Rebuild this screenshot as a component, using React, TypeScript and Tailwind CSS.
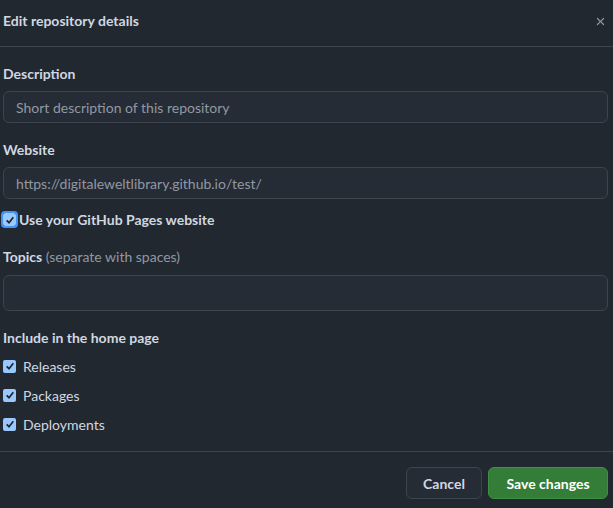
const Check = ({ focused = false }: { focused?: boolean }) => (
  <span
    className={`flex h-[13px] w-[13px] shrink-0 items-center justify-center rounded-[2px] bg-[#99c8ff] ${
      focused ? "outline outline-2 outline-[#4493f8]" : ""
    }`}
  >
    <svg viewBox="0 0 12 12" className="h-[10px] w-[10px]">
      <path d="M2 6.5 L4.8 9.2 L10 2.8" fill="none" stroke="#1f2328" strokeWidth="2" />
    </svg>
  </span>
);

const Field = ({ value, placeholder, tall = false }: { value?: string; placeholder?: string; tall?: boolean }) => (
  <div
    className={`mr-[5px] ml-[3px] flex items-center rounded-md border border-[#3d444d] bg-[#262c36] px-3 text-[14px] ${
      tall ? "h-[36px]" : "h-[32px]"
    }`}
  >
    {value ? <span className="text-[#9198a1]">{value}</span> : <span className="text-[#9198a1]">{placeholder}</span>}
  </div>
);

export default function App() {
  return (
    <div className="h-[508px] w-[613px] bg-[#212830] font-['Lato','Noto_Sans',sans-serif] text-[#d1d7e0]">
      {/* header */}
      <div className="flex h-[47px] items-center justify-between border-b border-[#3d444d] pr-[6px] pl-[3px]">
        <h1 className="-mt-[6px] text-[14px] font-bold">Edit repository details</h1>
        <svg viewBox="0 0 16 16" className="-mt-[4px] h-[13px] w-[13px]" fill="#9198a1">
          <path d="M3.72 3.72a.75.75 0 0 1 1.06 0L8 6.94l3.22-3.22a.749.749 0 1 1 1.06 1.06L9.06 8l3.22 3.22a.749.749 0 1 1-1.06 1.06L8 9.06l-3.22 3.22a.749.749 0 1 1-1.06-1.06L6.94 8 3.72 4.78a.75.75 0 0 1 0-1.06Z" />
        </svg>
      </div>

      <div className="pt-[16px]">
        <label className="ml-[3px] block text-[14px] font-bold">Description</label>
        <div className="mt-[7px]">
          <Field placeholder="Short description of this repository" />
        </div>

        <label className="mt-[16px] ml-[3px] block text-[14px] font-bold">Website</label>
        <div className="mt-[7px]">
          <Field value="https://digitaleweltlibrary.github.io/test/" />
        </div>

        <div className="mt-[10px] ml-[3px] flex items-center gap-[3px]">
          <Check focused />
          <span className="text-[14px] font-bold">Use your GitHub Pages website</span>
        </div>

        <label className="mt-[16px] ml-[3px] block text-[14px]">
          <span className="font-bold">Topics</span> <span className="text-[#9198a1]">(separate with spaces)</span>
        </label>
        <div className="mt-[8px]">
          <Field tall />
        </div>

        <div className="mt-[16px] ml-[3px] text-[14px] font-bold">Include in the home page</div>
        <div className="mt-[8px] ml-[3px] flex flex-col gap-[9px]">
          {["Releases", "Packages", "Deployments"].map((t) => (
            <div key={t} className="flex h-[20px] items-center gap-[7px]">
              <Check />
              <span className="text-[14px]">{t}</span>
            </div>
          ))}
        </div>
      </div>

      {/* footer */}
      <div className="mt-[17px] flex justify-end gap-[6px] border-t border-[#3d444d] pt-[15px] pr-[5px]">
        <button className="h-[32px] w-[76px] rounded-md border border-[#3d444d] bg-[#262c36] text-[14px] font-bold text-[#d1d7e0]">
          Cancel
        </button>
        <button className="h-[32px] w-[120px] rounded-md border border-[#3f8f45] bg-[#347d39] text-[14px] font-bold text-white">
          Save changes
        </button>
      </div>
    </div>
  );
}
